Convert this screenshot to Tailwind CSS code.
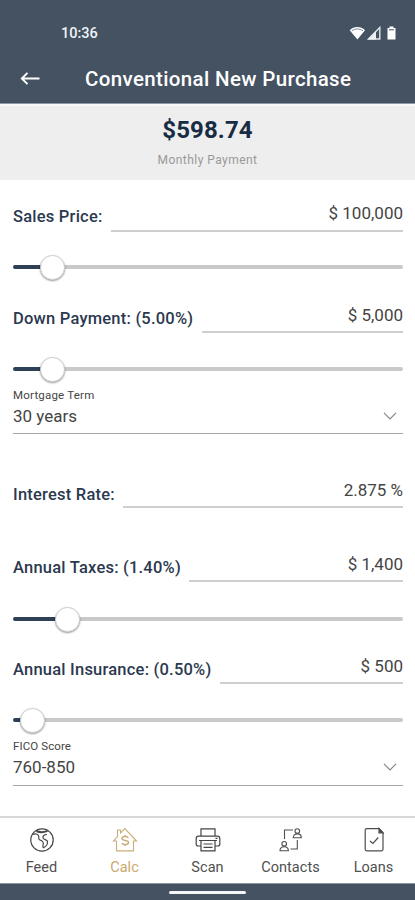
<!DOCTYPE html>
<html lang="en">
<head>
<meta charset="utf-8">
<title>Conventional New Purchase</title>
<script src="https://cdn.jsdelivr.net/npm/@tailwindcss/browser@4"></script>
</head>
<body class="bg-white font-['Roboto',sans-serif]">
<div class="flex h-[900px] w-[415px] flex-col overflow-hidden bg-white">
  <header class="h-[104px] shrink-0 border-b border-[#8b99a6] bg-[#445262] text-white">
    <div class="flex h-[54px] items-end justify-between pr-[18px] pb-[10px] pl-[61px]">
      <span class="text-[14.5px] leading-[20px] font-medium text-[#eef4f8]">10:36</span>
      <svg class="mb-[3px]" width="48" height="16" viewBox="0 0 48 16" fill="none">
        <path d="M.7 5.200C4.900 1 11.800 1 16 5.200L8.400 14.500Z" fill="#fff"/>
        <path d="M2.800 5.800C6 3.400 10.800 3.400 14 5.800" stroke="#7a8794" stroke-width="1"/>
        <path d="M19.500 14 30.800 2.500V14Z" stroke="#dfe6eb" stroke-width="1.400"/>
        <path d="M18.500 14.600 27 6V14.600Z" fill="#e8eef2"/>
        <path d="M40.500 3V1.500H44.500V3H46.500V14.500H38.500V3Z" fill="#fff"/>
        <path d="M40 4.800H45" stroke="#445262" stroke-width="1"/>
      </svg>
    </div>
    <div class="flex h-[50px] items-center">
      <svg class="ml-[20px] h-[14px] w-[20px]" viewBox="0 0 20 14" fill="none" stroke="#fff" stroke-width="1.900"><path d="M19.500 6.500H2M7.500 .8 1.800 6.500 7.500 12.200"/></svg>
      <h1 class="ml-[45px] text-[20.5px] leading-[24px] font-medium tracking-[0.36px] whitespace-nowrap">Conventional New Purchase</h1>
    </div>
  </header>
  <section class="flex h-[76px] shrink-0 flex-col items-center border-t-2 border-[#f8f8f8] bg-[#eee]">
    <div class="mt-[10px] text-[24px] leading-[28px] font-bold tracking-[0.1px] text-[#182c44]">$598.74</div>
    <div class="mt-[8px] text-[12px] leading-[16px] tracking-[0.45px] text-[#999]">Monthly Payment</div>
  </section>
  <main class="flex flex-1 flex-col pr-[12px] pl-[13px] text-[17px] text-[#444]">
    <div class="flex h-[52px] items-end gap-[8px]">
      <label class="pb-[4px] text-[16.5px] leading-[22px] font-medium tracking-[0.22px] whitespace-nowrap text-[#2b394f]">Sales Price:</label>
      <div class="flex-1 border-b-2 border-[#cfcfcf] pb-[6px] text-right leading-[22px]">$ 100,000</div>
    </div>
    <div class="relative mt-[22px] flex h-[26px] items-center">
      <div class="h-[4px] w-[39px] rounded-l-full bg-[#2e4055]"></div><div class="h-[4px] flex-1 rounded-r-full bg-[#c9c9c9]"></div>
      <div class="absolute left-[27px] size-[25px] rounded-full border border-[#d0d0d0] bg-white shadow-[0_1px_2px_rgba(0,0,0,0.4)]"></div>
    </div>
    <div class="flex h-[53px] items-end gap-[9px]">
      <label class="pb-[3px] text-[16.5px] leading-[22px] font-medium tracking-[0.22px] whitespace-nowrap text-[#2b394f]">Down Payment: (5.00%)</label>
      <div class="flex-1 border-b-2 border-[#cfcfcf] pb-[5px] text-right leading-[22px]">$ 5,000</div>
    </div>
    <div class="relative mt-[23px] flex h-[26px] items-center">
      <div class="h-[4px] w-[39px] rounded-l-full bg-[#2e4055]"></div><div class="h-[4px] flex-1 rounded-r-full bg-[#c9c9c9]"></div>
      <div class="absolute left-[27px] size-[25px] rounded-full border border-[#d0d0d0] bg-white shadow-[0_1px_2px_rgba(0,0,0,0.4)]"></div>
    </div>
    <div class="flex h-[52px] flex-col border-b border-[#a8a8a8] pt-[6px]">
      <span class="text-[11.5px] leading-[15px] tracking-[0.2px]">Mortgage Term</span>
      <div class="mt-[2px] flex items-center justify-between pr-[6px] leading-[22px]"><span>30 years</span>
        <svg width="14" height="8" viewBox="0 0 14 8" fill="none" stroke="#858585" stroke-width="1.200"><path d="M1 .8 7 6.800 13 .8"/></svg></div>
    </div>
    <div class="flex h-[74px] items-end gap-[8px]">
      <label class="pb-[2px] text-[16.5px] leading-[22px] font-medium tracking-[0.22px] whitespace-nowrap text-[#2b394f]">Interest Rate:</label>
      <div class="flex-1 border-b-2 border-[#cfcfcf] pb-[5px] text-right leading-[22px]">2.875 %</div>
    </div>
    <div class="flex h-[74px] items-end gap-[8px]">
      <label class="pb-[3px] text-[16.5px] leading-[22px] font-medium tracking-[0.22px] whitespace-nowrap text-[#2b394f]">Annual Taxes: (1.40%)</label>
      <div class="flex-1 border-b-2 border-[#cfcfcf] pb-[5px] text-right leading-[22px]">$ 1,400</div>
    </div>
    <div class="relative mt-[24px] flex h-[26px] items-center">
      <div class="h-[4px] w-[55px] rounded-l-full bg-[#2e4055]"></div><div class="h-[4px] flex-1 rounded-r-full bg-[#c9c9c9]"></div>
      <div class="absolute left-[42px] size-[25px] rounded-full border border-[#d0d0d0] bg-white shadow-[0_1px_2px_rgba(0,0,0,0.4)]"></div>
    </div>
    <div class="flex h-[52px] items-end gap-[9px]">
      <label class="pb-[3px] text-[16.5px] leading-[22px] font-medium tracking-[0.22px] whitespace-nowrap text-[#2b394f]">Annual Insurance: (0.50%)</label>
      <div class="flex-1 border-b-2 border-[#cfcfcf] pb-[5px] text-right leading-[22px]">$ 500</div>
    </div>
    <div class="relative mt-[23px] flex h-[26px] items-center">
      <div class="h-[4px] w-[20px] rounded-l-full bg-[#2e4055]"></div><div class="h-[4px] flex-1 rounded-r-full bg-[#c9c9c9]"></div>
      <div class="absolute left-[7px] size-[25px] rounded-full border border-[#d0d0d0] bg-white shadow-[0_1px_2px_rgba(0,0,0,0.4)]"></div>
    </div>
    <div class="flex h-[53px] flex-col border-b border-[#a8a8a8] pt-[6px]">
      <span class="text-[11.5px] leading-[15px] tracking-[0.1px]">FICO Score</span>
      <div class="mt-[2px] flex items-center justify-between pr-[6px] leading-[22px]"><span>760-850</span>
        <svg width="14" height="8" viewBox="0 0 14 8" fill="none" stroke="#858585" stroke-width="1.200"><path d="M1 .8 7 6.800 13 .8"/></svg></div>
    </div>
  </main>
  <nav class="grid h-[67px] shrink-0 grid-cols-5 border-t-2 border-[#d8d8d8] text-center text-[14.5px] leading-[18px] tracking-[0.05px] text-[#505050]">
    <div class="flex flex-col items-center pt-[9px]">
      <svg width="26" height="26" viewBox="0 0 26 26" fill="none" stroke="#454545" stroke-width="1.200"><circle cx="13" cy="13" r="11.200"/><path d="M3.500 7.500C6 6.500 8.500 7 9.500 8.500C10.300 10 9 11.500 10.500 12.800C12.500 13.500 14.500 14.300 14.300 16.800C14.200 18.500 13.300 19.800 14.300 20.800C16.500 20 18.800 17.500 18.500 14.500C18 12.300 14.800 13 14 11C13.500 9 15 7.500 18 7.500"/><path d="M7.500 4C10.500 5.500 15 5.300 18.500 3.800" stroke-width="2"/></svg>
      <span class="mt-[6px]">Feed</span>
    </div>
    <div class="flex flex-col items-center pt-[9px] text-[#caa86c]">
      <svg width="26" height="26" viewBox="0 0 26 26" fill="none" stroke="#c9ad78" stroke-width="1.100"><path d="M4.500 14V23.900H21.500V14H24.500L12.800 1.500 8.500 6V3H5.500V9.500L1.500 14H4.500"/><path d="M16.300 10.800C15.500 9.300 10 8.900 10 11.500C10 14.300 16.500 12.700 16.500 15.500C16.500 18.300 10.700 17.700 9.700 16.300M13 8V9.500M13 17.500V19" stroke-width="1.500"/></svg>
      <span class="mt-[6px]">Calc</span>
    </div>
    <div class="flex flex-col items-center pt-[9px]">
      <svg width="26" height="26" viewBox="0 0 26 26" fill="none" stroke="#454545" stroke-width="1.200"><path d="M6 9V1.800H20V9M5.500 19H3.200Q1.200 19 1.200 17V11.500Q1.200 9.200 3.500 9.200H22.500Q24.800 9.200 24.800 11.500V17Q24.800 19 22.800 19H20.500M6 13.500H20V23.800H6ZM4 13.500H22M8.500 17H17.500M8.500 20.300H17.500M20.500 11.300H22.500"/></svg>
      <span class="mt-[6px]">Scan</span>
    </div>
    <div class="flex flex-col items-center pt-[9px]">
      <svg width="26" height="26" viewBox="0 0 26 26" fill="none" stroke="#505050" stroke-width="1.100"><circle cx="19.300" cy="4" r="2.300"/><path d="M15.300 10.800Q15.300 6.900 19.300 6.900T23.300 10.800ZM15 3H6.500V12"/><circle cx="6.200" cy="16.800" r="2.300"/><path d="M2 23.800Q2 19.700 6.200 19.700T10.400 23.800ZM19.300 13V22H12.500"/></svg>
      <span class="mt-[6px]">Contacts</span>
    </div>
    <div class="flex flex-col items-center pt-[9px]">
      <svg width="26" height="26" viewBox="0 0 26 26" fill="none" stroke="#4c4c4c" stroke-width="1.200"><path d="M5.700 1.600H18L22 5.800V22.300Q22 23.800 20.500 23.800H5.700Q4.200 23.800 4.200 22.300V3.100Q4.200 1.600 5.700 1.600Z"/><path d="M18 1.600V5.800H22Z" fill="#4c4c4c"/><path d="M9 14 11.900 16.500 17.300 10.500"/></svg>
      <span class="mt-[6px]">Loans</span>
    </div>
  </nav>
  <footer class="flex h-[17px] shrink-0 justify-center border-t border-[#8995a0] bg-[#445262]"><div class="mt-[7px] h-[3px] w-[77px] rounded-full bg-[#f4f6f7]"></div></footer>
</div>
</body>
</html>
